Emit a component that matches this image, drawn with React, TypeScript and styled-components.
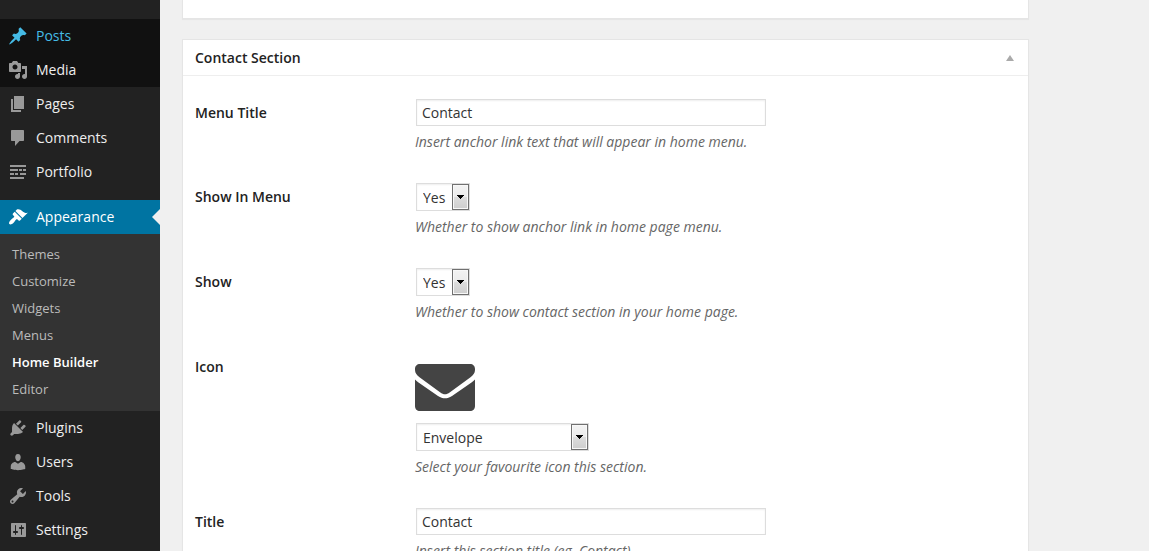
import React from "react";
import styled, { createGlobalStyle, css } from "styled-components";

const GlobalStyle = createGlobalStyle`
  *, *::before, *::after { box-sizing: border-box; }
  body {
    margin: 0;
    background: #f0f0f0;
    color: #444;
    font-family: "Open Sans", "Noto Sans", sans-serif;
    font-size: 14px;
    line-height: 20px;
  }
`;

const Page = styled.div`
  display: flex;
  height: 100vh;
  overflow: hidden;
`;

const Sidebar = styled.nav`
  flex: 0 0 160px;
  padding-top: 19px;
  background: #222;
`;

const MenuList = styled.ul`
  margin: 0;
  padding: 0;
  list-style: none;
`;

const MenuItem = styled.li<{ $spaced?: boolean }>`
  margin-top: ${(p) => (p.$spaced ? 11 : 0)}px;
`;

type Tone = "normal" | "dark" | "hover" | "current";

const tones: Record<Tone, { bg: string; text: string; icon: string }> = {
  normal: { bg: "#222", text: "#eee", icon: "#999" },
  dark: { bg: "#111", text: "#eee", icon: "#999" },
  hover: { bg: "#111", text: "#45bbe6", icon: "#45bbe6" },
  current: { bg: "#0074a2", text: "#fff", icon: "#fff" },
};

const MenuLink = styled.a<{ $tone: Tone }>`
  position: relative;
  display: flex;
  align-items: center;
  gap: 8px;
  height: 34px;
  padding-left: 8px;
  background: ${(p) => tones[p.$tone].bg};
  color: ${(p) => tones[p.$tone].text};
  text-decoration: none;

  svg {
    flex: none;
    fill: ${(p) => tones[p.$tone].icon};
  }

  ${(p) =>
    p.$tone === "current" &&
    css`
      &::after {
        content: "";
        position: absolute;
        top: 9px;
        right: 0;
        border: 8px solid transparent;
        border-left-width: 0;
        border-right-color: #f0f0f0;
      }
    `}
`;

const SubMenu = styled.ul`
  margin: 0;
  padding: 7px 0 8px;
  list-style: none;
  background: #333;
`;

const SubLink = styled.a<{ $active?: boolean }>`
  display: block;
  padding: 0 12px;
  font-size: 13px;
  line-height: 27px;
  color: ${(p) => (p.$active ? "#fff" : "#bbb")};
  font-weight: ${(p) => (p.$active ? 600 : 400)};
  text-decoration: none;
`;

const Content = styled.main`
  flex: 1;
  min-width: 0;
  padding: 0 120px 0 22px;
`;

const Box = styled.section`
  margin-bottom: 20px;
  background: #fff;
  border: 1px solid #e5e5e5;
  box-shadow: 0 1px 1px rgba(0, 0, 0, 0.04);
`;

const PreviousBox = styled(Box)`
  height: 19px;
  border-top: 0;
`;

const BoxHeader = styled.header`
  display: flex;
  align-items: center;
  justify-content: space-between;
  height: 36px;
  padding: 0 12px;
  border-bottom: 1px solid #eee;
`;

const BoxTitle = styled.h3`
  margin: 0;
  font-size: 14px;
  font-weight: 600;
  color: #222;
`;

const Toggle = styled.button`
  display: flex;
  padding: 2px;
  border: 0;
  background: none;
  cursor: pointer;
`;

const Form = styled.form`
  padding: 7px 12px 0;
`;

const Row = styled.div`
  display: flex;
`;

const RowLabel = styled.label`
  flex: 0 0 220px;
  padding-top: 20px;
  font-weight: 600;
  color: #222;
`;

const Field = styled.div`
  flex: 1;
  min-width: 0;
  padding: 15px 0;
`;

const TextInput = styled.input`
  display: block;
  width: 350px;
  max-width: 100%;
  height: 27px;
  margin: 1px;
  padding: 0 5px;
  border: 1px solid #ddd;
  background: #fff;
  box-shadow: inset 0 1px 2px rgba(0, 0, 0, 0.07);
  color: #333;
  font: inherit;
`;

const SelectBox = styled.div<{ $width: number }>`
  position: relative;
  width: ${(p) => p.$width}px;
  margin: 1px;

  svg {
    position: absolute;
    top: 1px;
    right: 1px;
    pointer-events: none;
  }
`;

const Select = styled.select`
  display: block;
  width: 100%;
  height: 28px;
  padding: 2px 18px 0 6px;
  border: 1px solid #ddd;
  border-radius: 0;
  background: #fff;
  box-shadow: inset 0 1px 2px rgba(0, 0, 0, 0.07);
  color: #333;
  font: inherit;
  appearance: none;
`;

const Description = styled.p`
  margin: 5px 0 0;
  line-height: 21px;
  font-style: italic;
  color: #666;
`;

const IconPreview = styled.div`
  height: 70px;
  padding-top: 12px;
`;

const paths = {
  post: "M10.44 3.02l1.82-1.82 6.36 6.35-1.83 1.82c-1.05-.68-2.48-.57-3.41.36l-.75.75c-.92.93-1.04 2.35-.35 3.41l-1.83 1.82-2.41-2.41-2.8 2.79c-.42.42-3.38 2.71-3.8 2.29s1.86-3.39 2.28-3.81l2.79-2.79L4.1 9.36l1.83-1.82c1.05.69 2.48.57 3.4-.36l.75-.75c.93-.92 1.05-2.35.36-3.41z",
  media:
    "M13 11V4c0-.55-.45-1-1-1h-1.67L9 1H5L3.67 3H2c-.55 0-1 .45-1 1v7c0 .55.45 1 1 1h10c.55 0 1-.45 1-1zM7 4.5c1.38 0 2.5 1.12 2.5 2.5S8.38 9.5 7 9.5 4.5 8.38 4.5 7 5.62 4.5 7 4.5zM14 6h5v10.5c0 1.38-1.12 2.5-2.5 2.5S14 17.88 14 16.5s1.12-2.5 2.5-2.5c.17 0 .34.02.5.05V9h-3V6zm-4 8.05V13h2v3.5c0 1.38-1.12 2.5-2.5 2.5S7 17.88 7 16.5 8.12 14 9.5 14c.17 0 .34.02.5.05z",
  page: "M6 15V2h10v13H6zm-1 1h8v2H3V5h2v11z",
  comments:
    "M4 2h11c.6 0 1 .4 1 1v9c0 .6-.4 1-1 1h-3.500l-4.500 5v-5H4c-.6 0-1-.4-1-1V3c0-.6.4-1 1-1z",
  portfolio:
    "M2 3h16v2H2zM2 7h8v2H2zM11 7h3v2h-3zM15 7h3v2h-3zM2 11h4v2H2zM7 11h3v2H7zM12 11h6v2h-6zM2 15h14v2H2z",
  appearance:
    "M14.48 11.06L7.41 3.99l1.5-1.5c.5-.56 2.3-.47 3.51.32 1.21.8 1.43 1.28 2.91 2.1 1.18.64 2.45 1.26 4.45.85zm-.71.71L6.7 4.7 4.93 6.47c-.39.39-.39 1.02 0 1.41l1.06 1.06c.39.39.39 1.03 0 1.42-.6.6-1.43 1.11-2.21 1.69-.35.26-.7.53-1.01.84C1.43 14.23.4 16.08 1.4 17.07c.99 1 2.84-.03 4.18-1.36.31-.31.58-.66.85-1.02.57-.78 1.08-1.61 1.69-2.21.39-.39 1.02-.39 1.41 0l1.06 1.06c.39.39 1.02.39 1.41 0z",
  plugins:
    "M13.11 4.36L9.87 7.6 8 5.73l3.24-3.24c.35-.34 1.05-.2 1.56.32.52.51.66 1.21.31 1.55zm-8 1.77l.91-1.12 9.01 9.01-1.19.84c-.71.71-2.63 1.16-3.82 1.16H6.14L4.9 17.26c-.59.59-1.54.59-2.12 0-.59-.58-.59-1.53 0-2.12l1.24-1.24v-3.88c0-1.13.4-3.19 1.09-3.89zm7.26 3.97l3.24-3.24c.34-.35 1.04-.21 1.55.31.52.51.66 1.21.31 1.55l-3.24 3.25z",
  users:
    "M10 9.25c-2.27 0-2.73-3.44-2.73-3.44C7 4.02 7.82 2 9.97 2c2.16 0 2.98 2.02 2.71 3.81 0 0-.41 3.44-2.68 3.44zm0 2.57L12.72 10c2.39 0 4.52 2.33 4.52 4.53v2.49s-3.65 1.13-7.24 1.13c-3.65 0-7.24-1.13-7.24-1.13v-2.49c0-2.25 1.94-4.48 4.47-4.48z",
  tools:
    "M16.68 9.77c-1.34 1.34-3.3 1.67-4.95.99l-5.41 6.52c-.99.99-2.59.99-3.58 0s-.99-2.59 0-3.57l6.52-5.42c-.68-1.65-.35-3.61.99-4.95 1.28-1.28 3.12-1.62 4.72-1.06l-2.89 2.89 2.82 2.82 2.86-2.87c.53 1.58.18 3.39-1.08 4.65zM3.81 16.21c.4.39 1.04.39 1.43 0 .4-.4.4-1.04 0-1.43-.39-.4-1.03-.4-1.43 0-.39.39-.39 1.03 0 1.43z",
  settings:
    "M18 16V4c0-.55-.45-1-1-1H4c-.55 0-1 .45-1 1v12c0 .55.45 1 1 1h13c.55 0 1-.45 1-1zM8 11h1c.55 0 1 .45 1 1s-.45 1-1 1H8v1.5c0 .28-.22.5-.5.5s-.5-.22-.5-.5V13H6c-.55 0-1-.45-1-1s.45-1 1-1h1V5.500c0-.28.22-.5.5-.5s.5.22.5.5V11zm5-2h-1c-.55 0-1-.45-1-1s.45-1 1-1h1V5.500c0-.28.22-.5.5-.5s.5.22.5.5V7h1c.55 0 1 .45 1 1s-.45 1-1 1h-1v5.500c0 .28-.22.5-.5.5s-.5-.22-.5-.5V9z",
};

type IconName = keyof typeof paths;

const MenuIcon = ({ name }: { name: IconName }) => (
  <svg width="20" height="20" viewBox="0 0 20 20" aria-hidden="true">
    <path fillRule="evenodd" d={paths[name]} />
  </svg>
);

const EnvelopeIcon = () => (
  <svg width="60" height="47" viewBox="0 0 60 47" fill="#444" aria-hidden="true">
    <path d="M5 0H55C58 0 60 2 60 5V6C60 9 58 11.500 55.500 13.300L35 28.200C33 29.600 31.500 30.200 30 30.200S27 29.600 25 28.200L4.500 13.300C2 11.500 0 9 0 6V5C0 2 2 0 5 0Z" />
    <path d="M0 15.500C1 16.600 2.200 17.500 3.500 18.400L23 32C25.500 33.700 27.700 34.300 30 34.300S34.500 33.700 37 32L56.500 18.400C57.800 17.500 59 16.600 60 15.500V42C60 45 58 47 55 47H5C2 47 0 45 0 42Z" />
  </svg>
);

interface MenuEntry {
  label: string;
  icon: IconName;
  tone?: Tone;
  spaced?: boolean;
  children?: string[];
}

const menu: MenuEntry[] = [
  { label: "Posts", icon: "post", tone: "hover" },
  { label: "Media", icon: "media", tone: "dark" },
  { label: "Pages", icon: "page" },
  { label: "Comments", icon: "comments" },
  { label: "Portfolio", icon: "portfolio" },
  {
    label: "Appearance",
    icon: "appearance",
    tone: "current",
    spaced: true,
    children: ["Themes", "Customize", "Widgets", "Menus", "Home Builder", "Editor"],
  },
  { label: "Plugins", icon: "plugins" },
  { label: "Users", icon: "users" },
  { label: "Tools", icon: "tools" },
  { label: "Settings", icon: "settings" },
];

interface DropdownProps {
  id: string;
  width: number;
  options: string[];
}

const Dropdown = ({ id, width, options }: DropdownProps) => (
  <SelectBox $width={width}>
    <Select id={id} defaultValue={options[0]}>
      {options.map((o) => (
        <option key={o}>{o}</option>
      ))}
    </Select>
    <svg width="17" height="26" viewBox="0 0 17 26" aria-hidden="true">
      <defs>
        <linearGradient id={`${id}-face`} x1="0" y1="0" x2="0" y2="1">
          <stop offset="0" stopColor="#f2f2f2" />
          <stop offset=".5" stopColor="#ebebeb" />
          <stop offset=".5" stopColor="#dddddd" />
          <stop offset="1" stopColor="#cfcfcf" />
        </linearGradient>
      </defs>
      <rect width="17" height="26" fill="#707070" />
      <rect x="1" y="1" width="15" height="24" fill="#f8f8f8" />
      <rect x="2" y="2" width="13" height="22" fill={`url(#${id}-face)`} />
      <path d="M5 11h7v1h-1v1h-1v1h-1v1h-1v-1h-1v-1h-1v-1h-1z" fill="#000" />
    </svg>
  </SelectBox>
);

interface FieldRowProps {
  id: string;
  label: string;
  hint: string;
  children: React.ReactNode;
}

const FieldRow = ({ id, label, hint, children }: FieldRowProps) => (
  <Row>
    <RowLabel htmlFor={id}>{label}</RowLabel>
    <Field>
      {children}
      <Description>{hint}</Description>
    </Field>
  </Row>
);

export default function App() {
  return (
    <>
      <GlobalStyle />
      <Page>
        <Sidebar>
          <MenuList>
            {menu.map((m) => (
              <MenuItem key={m.label} $spaced={m.spaced}>
                <MenuLink href="#" $tone={m.tone ?? "normal"}>
                  <MenuIcon name={m.icon} />
                  {m.label}
                </MenuLink>
                {m.children && (
                  <SubMenu>
                    {m.children.map((c) => (
                      <li key={c}>
                        <SubLink href="#" $active={c === "Home Builder"}>
                          {c}
                        </SubLink>
                      </li>
                    ))}
                  </SubMenu>
                )}
              </MenuItem>
            ))}
          </MenuList>
        </Sidebar>
        <Content>
          <PreviousBox />
          <Box>
            <BoxHeader>
              <BoxTitle>Contact Section</BoxTitle>
              <Toggle type="button" aria-label="Toggle panel">
                <svg width="8" height="6" viewBox="0 0 8 6" fill="#aaa" aria-hidden="true">
                  <path d="M4 0L8 6H0z" />
                </svg>
              </Toggle>
            </BoxHeader>
            <Form>
              <FieldRow
                id="menu-title"
                label="Menu Title"
                hint="Insert anchor link text that will appear in home menu."
              >
                <TextInput id="menu-title" type="text" defaultValue="Contact" />
              </FieldRow>
              <FieldRow
                id="show-in-menu"
                label="Show In Menu"
                hint="Whether to show anchor link in home page menu."
              >
                <Dropdown id="show-in-menu" width={54} options={["Yes", "No"]} />
              </FieldRow>
              <FieldRow
                id="show"
                label="Show"
                hint="Whether to show contact section in your home page."
              >
                <Dropdown id="show" width={54} options={["Yes", "No"]} />
              </FieldRow>
              <FieldRow id="icon" label="Icon" hint="Select your favourite icon this section.">
                <IconPreview>
                  <EnvelopeIcon />
                </IconPreview>
                <Dropdown id="icon" width={173} options={["Envelope"]} />
              </FieldRow>
              <FieldRow id="title" label="Title" hint="Insert this section title (eg. Contact)">
                <TextInput id="title" type="text" defaultValue="Contact" />
              </FieldRow>
            </Form>
          </Box>
        </Content>
      </Page>
    </>
  );
}
